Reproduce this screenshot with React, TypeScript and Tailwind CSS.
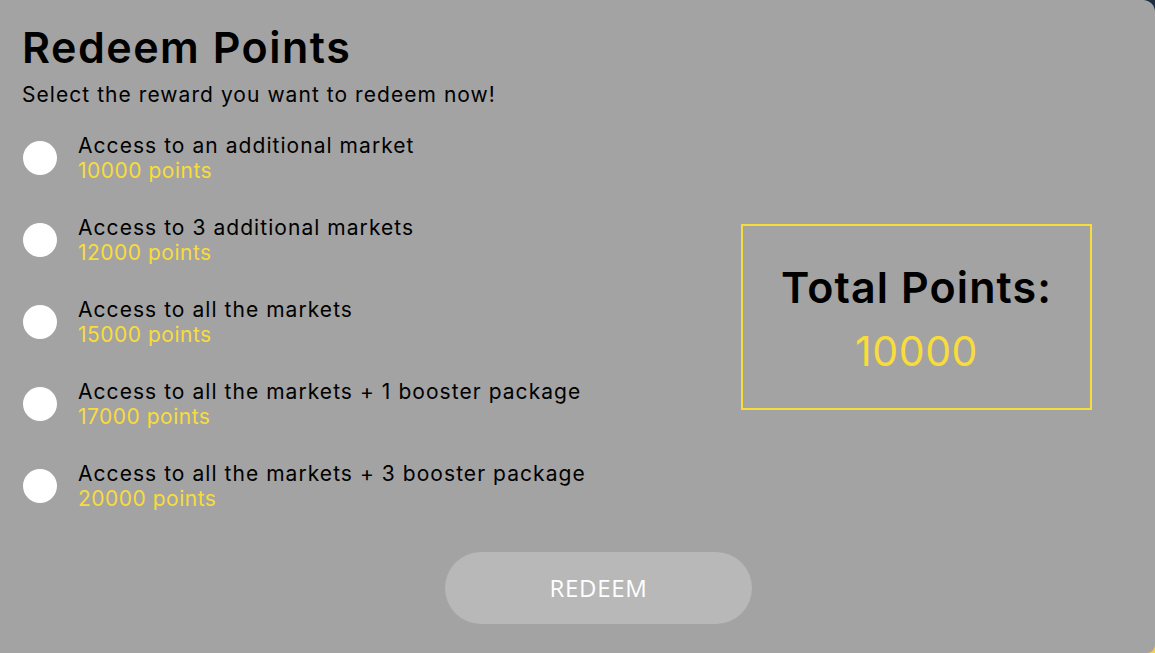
import React from "react";

const items = [
  { label: "Access to an additional market", points: "10000 points" },
  { label: "Access to 3 additional markets", points: "12000 points" },
  { label: "Access to all the markets", points: "15000 points" },
  { label: "Access to all the markets + 1 booster package", points: "17000 points" },
  { label: "Access to all the markets + 3 booster package", points: "20000 points" },
];

export default function App() {
  return (
    <div className="relative w-[1155px] h-[653px] bg-[#1d2c40] overflow-hidden" style={{ fontFamily: "Inter, 'Noto Sans', sans-serif" }}>
      <div className="absolute right-0 bottom-0 w-[12px] h-[12px] bg-[#f4d63a]" />
      <div className="relative h-full w-full bg-[#a3a3a3] rounded-tr-[12px] rounded-br-[8px] flex flex-col">
        <div className="pl-[22px] pt-[22px]">
          <h1 className="text-[43px] leading-[50px] font-semibold text-black tracking-[1.5px]">Redeem Points</h1>
          <p className="text-[21px] leading-[28px] text-black mt-[9px] tracking-[1.05px]">Select the reward you want to redeem now!</p>
        </div>
        <div className="flex items-center pr-[63px] mt-[24px]">
          <div className="flex-1 pl-[23px] flex flex-col gap-[32px]">
            {items.map((it) => (
              <div key={it.points} className="flex items-center gap-[21px]">
                <div className="w-[34px] h-[34px] rounded-full bg-white shrink-0" />
                <div className="flex flex-col">
                  <span className="text-[21px] leading-[25px] text-black tracking-[1.05px]">{it.label}</span>
                  <span className="text-[21px] leading-[25px] text-[#f8dc3c] tracking-[0.5px]">{it.points}</span>
                </div>
              </div>
            ))}
          </div>
          <div className="w-[351px] h-[186px] mb-[10px] border-2 border-[#f8dc3c] flex flex-col items-center justify-center pt-[6px]">
            <div className="text-[43px] leading-[56px] font-semibold text-black tracking-[1.1px]">Total Points:</div>
            <div className="text-[41px] leading-[60px] text-[#f8dc3c] mt-[6px] tracking-[0.6px]">10000</div>
          </div>
        </div>
        <div className="flex justify-center mt-[41px] pl-[42px]">
          <button className="w-[307px] h-[72px] rounded-full bg-[#b8b8b8] text-white text-[24px] tracking-[0.7px]" style={{ fontFamily: "'Open Sans', sans-serif" }}>
            REDEEM
          </button>
        </div>
      </div>
    </div>
  );
}
